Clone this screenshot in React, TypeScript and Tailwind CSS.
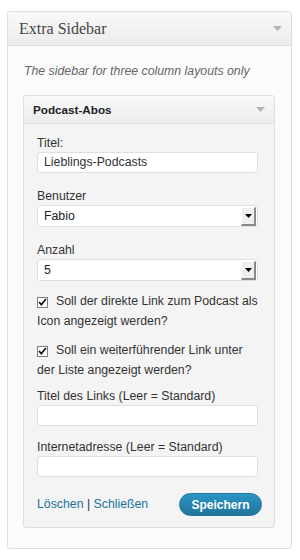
import React from "react";

const Arrow = () => (
  <svg width="9" height="5" viewBox="0 0 9 5" className="block">
    <path d="M0 0h9L4.5 5z" fill="#b4b4b4" />
  </svg>
);

const Label = ({ children }: { children: React.ReactNode }) => (
  <label className="text-[12.3px] leading-[14px] text-[#333]">{children}</label>
);

const Field = ({ label, value }: { label: string; value?: string }) => (
  <div className="flex flex-col">
    <Label>{label}</Label>
    <div className="mt-[2px] w-[221px] h-[21px] bg-white border border-[#dfdfdf] rounded-[3px] px-[6px] flex items-center text-[12.3px] text-[#333]">
      {value}
    </div>
  </div>
);

const Select = ({ label, value }: { label: string; value: string }) => (
  <div className="flex flex-col">
    <Label>{label}</Label>
    <div className="mt-[2px] w-[221px] h-[22px] bg-white border border-[#dfdfdf] rounded-[3px] pl-[6px] pr-[1px] flex items-center justify-between text-[12.3px] text-[#222]">
      <span>{value}</span>
      <div className="w-[15px] h-[19px] bg-[#efefef] border-t border-l border-t-white border-l-white border-r-2 border-b-2 border-r-[#8a8a8a] border-b-[#8a8a8a] flex items-center justify-center">
        <svg width="7" height="4" viewBox="0 0 7 4">
          <path d="M0 0h7L3.5 4z" fill="#000" />
        </svg>
      </div>
    </div>
  </div>
);

// checkbox sits inline, so the second line wraps back under it
const Check = ({ children }: { children: React.ReactNode }) => (
  <div className="text-[12.3px] leading-[20px] text-[#333]">
    <span className="inline-flex align-[-1px] mr-[8px] w-[11px] h-[11px] bg-white border border-[#7f7f7f] items-center justify-center">
      <svg width="9" height="8" viewBox="0 0 9 8">
        <path d="M1 4l2.3 2.6L8 1" stroke="#111" strokeWidth="1.7" fill="none" />
      </svg>
    </span>
    {children}
  </div>
);

export default function App() {
  return (
    <div className="w-[300px] h-[560px] bg-white pt-[11px] pl-[7px] font-['Liberation_Sans',Arial,sans-serif]">
      <div className="w-[285px] border border-[#dfdfdf] rounded-[3px] bg-[#fbfbfb] overflow-hidden pb-[20px]">
        <div className="h-[34px] bg-gradient-to-b from-[#f9f9f9] to-[#ececec] border-b border-[#dfdfdf] flex items-center justify-between pl-[11px] pr-[9px]">
          <span className="font-['Liberation_Serif',Georgia,serif] text-[16px] text-[#464646]">Extra Sidebar</span>
          <Arrow />
        </div>
        <div className="pl-[15px] pr-[16px] pt-[17px]">
          <p className="italic text-[12.3px] leading-[16px] text-[#666] pl-[1px]">The sidebar for three column layouts only</p>
          <div className="mt-[16px] w-[252px] border border-[#dfdfdf] rounded-[3px] bg-[#f4f4f4] overflow-hidden">
            <div className="h-[28px] bg-gradient-to-b from-[#f9f9f9] to-[#ececec] border-b border-[#dfdfdf] flex items-center justify-between pl-[9px] pr-[9px]">
              <span className="font-bold text-[11.7px] text-[#222]">Podcast-Abos</span>
              <Arrow />
            </div>
            <div className="pl-[13px] pr-[12px] pt-[12px] pb-[11px] flex flex-col">
              <Field label="Titel:" value="Lieblings-Podcasts" />
              <div className="mt-[16px]">
                <Select label="Benutzer" value="Fabio" />
              </div>
              <div className="mt-[16px]">
                <Select label="Anzahl" value="5" />
              </div>
              <div className="mt-[10px]">
                <Check>Soll der direkte Link zum Podcast als Icon angezeigt werden?</Check>
              </div>
              <div className="mt-[9px]">
                <Check>Soll ein weiterführender Link unter der Liste angezeigt werden?</Check>
              </div>
              <div className="mt-[9px]">
                <Field label="Titel des Links (Leer = Standard)" />
              </div>
              <div className="mt-[14px]">
                <Field label="Internetadresse (Leer = Standard)" />
              </div>
              <div className="mt-[16px] flex items-center justify-between">
                <span className="text-[12.3px] text-[#333]">
                  <a className="text-[#21759b]">Löschen</a> | <a className="text-[#21759b]">Schließen</a>
                </span>
                <button className="w-[83px] h-[23px] rounded-[12px] bg-gradient-to-b from-[#2a95c5] to-[#21759b] border border-[#21759b] text-white font-bold text-[12px]">
                  Speichern
                </button>
              </div>
            </div>
          </div>
        </div>
      </div>
    </div>
  );
}
